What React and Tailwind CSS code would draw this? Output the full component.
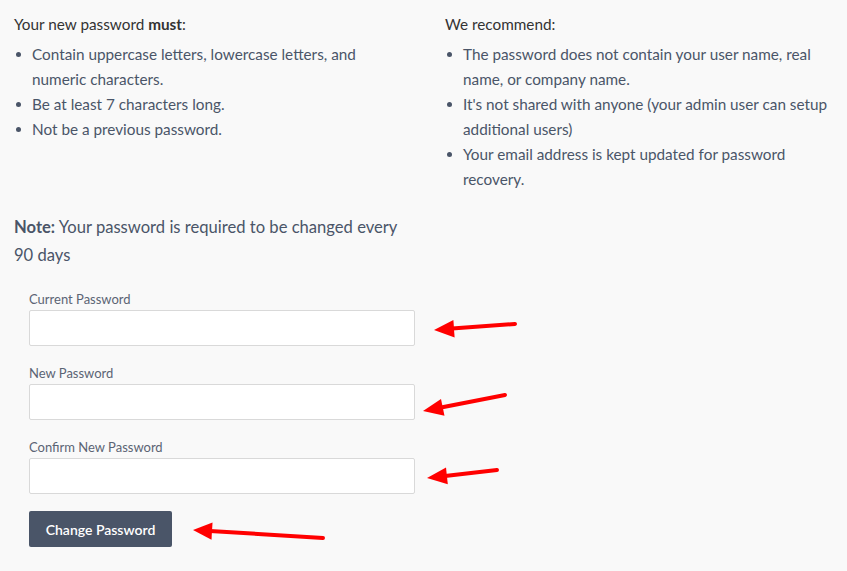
import React from "react";

const mustItems = [
  "Contain uppercase letters, lowercase letters, and numeric characters.",
  "Be at least 7 characters long.",
  "Not be a previous password.",
];

const recommendItems = [
  "The password does not contain your user name, real name, or company name.",
  "It's not shared with anyone (your admin user can setup additional users)",
  "Your email address is kept updated for password recovery.",
];

function Bullets({ items }) {
  return (
    <ul className="mt-[5px] flex flex-col">
      {items.map((item) => (
        <li key={item} className="flex text-[15.3px] leading-[25px] text-[#4a5568]">
          <span className="flex h-[25px] w-[18px] shrink-0 items-center pl-[2px]">
            <span className="block h-[5px] w-[5px] rounded-full bg-[#4a5568]" />
          </span>
          <span>{item}</span>
        </li>
      ))}
    </ul>
  );
}

function Field({ label }) {
  return (
    <div className="flex flex-col">
      <label className="text-[13px] leading-[18px] text-[#5b6474]">{label}</label>
      <input
        type="password"
        className="mt-[2px] h-[36px] w-[386px] rounded-[2px] border border-[#d9d9d9] bg-white outline-none"
      />
    </div>
  );
}

function Arrows() {
  return (
    <svg className="pointer-events-none absolute left-0 top-0" width="847" height="571" viewBox="0 0 847 571">
      <g stroke="#ff0000" strokeWidth="4" strokeLinecap="round" fill="none">
        <line x1="452" y1="328.6" x2="515" y2="324" />
        <line x1="441" y1="407.5" x2="505" y2="395" />
        <line x1="445" y1="476" x2="497" y2="470" />
        <line x1="210" y1="531" x2="323" y2="538" />
      </g>
      <g fill="#ff0000">
        <polygon points="434,330 454.6,337.5 453.4,320" />
        <polygon points="423,411 444.5,415.8 441,399" />
        <polygon points="427,478 447.8,484.3 446,467.5" />
        <polygon points="193,530 211.5,539.7 212.5,522.5" />
      </g>
    </svg>
  );
}

export default function App() {
  return (
    <div
      className="relative h-[571px] w-[847px] overflow-hidden bg-[#f9f9f9]"
      style={{ fontFamily: "Lato, 'Open Sans', sans-serif" }}
    >
      <div className="grid grid-cols-[431px_392px] pl-[14px] pt-3">
        <div className="pr-[60px]">
          <p className="text-[15.3px] leading-[25px] text-[#333]">
            Your new password <span className="font-bold">must</span>:
          </p>
          <Bullets items={mustItems} />
        </div>
        <div>
          <p className="text-[15.3px] leading-[25px] text-[#333]">We recommend:</p>
          <Bullets items={recommendItems} />
        </div>
      </div>

      <p className="mt-[21px] w-[402px] pl-[14px] text-[16.6px] leading-[28px] text-[#4a5568]">
        <span className="font-bold">Note:</span> Your password is required to be changed every 90 days
      </p>

      <form className="mt-[21px] flex flex-col gap-[18px] pl-[29px]">
        <Field label="Current Password" />
        <Field label="New Password" />
        <Field label="Confirm New Password" />
        <div className="-mt-[1px]">
          <button
            type="button"
            className="h-[36px] w-[143px] rounded-[2px] bg-[#4a5568] text-[14px] font-semibold text-white"
          >
            Change Password
          </button>
        </div>
      </form>

      <Arrows />
    </div>
  );
}
